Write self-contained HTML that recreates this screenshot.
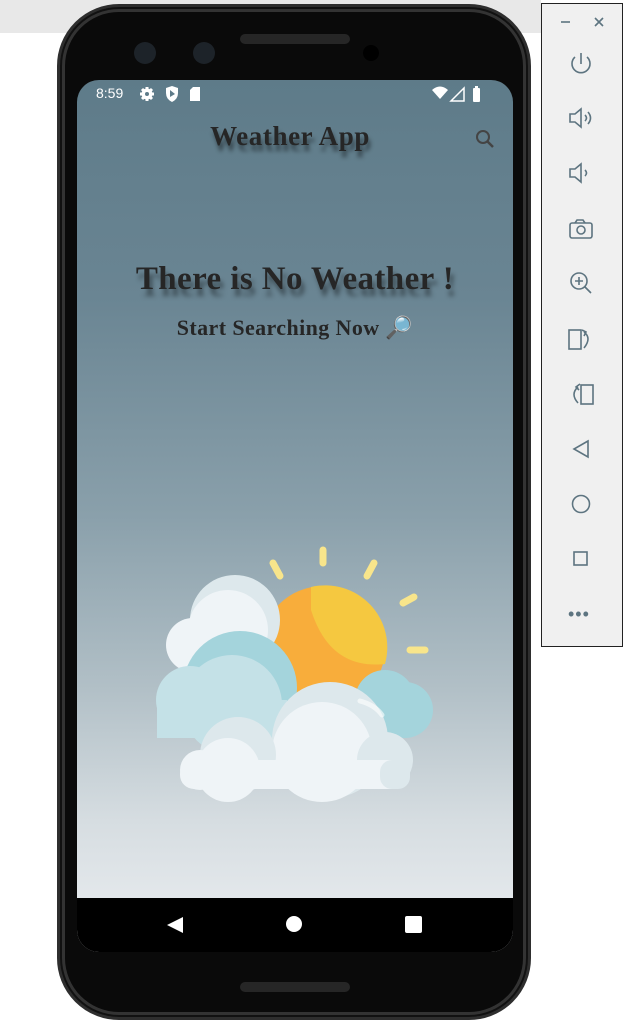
<!DOCTYPE html>
<html><head><meta charset="utf-8"><style>
*{margin:0;padding:0;box-sizing:border-box}
body{width:627px;height:1024px;position:relative;background:#fff;overflow:hidden;font-family:"Liberation Sans",sans-serif}
.topband{position:absolute;left:0;top:0;width:541px;height:33px;background:#e8e8e8}
.phone{position:absolute;left:57px;top:4px;width:474px;height:1016px;border-radius:62px;background:#0a0a0a;border:3px solid #2e2e2e;box-shadow:inset 0 0 0 2px #111,inset 0 0 0 5px #333}
.screen{position:absolute;left:77px;top:80px;width:436px;height:872px;border-radius:22px;overflow:hidden;background:linear-gradient(#5e7b89 0%,#6a8593 25%,#8aa0ab 50%,#b2c0c7 70%,#d6dde1 85%,#eceff2 100%)}
.nav{position:absolute;left:0;top:818px;width:436px;height:54px;background:#000}
.t{position:absolute;left:0;width:436px;text-align:center;font-family:"Liberation Serif",serif;font-weight:bold;color:#262626;white-space:nowrap}
.panel{position:absolute;left:541px;top:3px;width:82px;height:644px;background:#f0f0f0;border:1px solid #222}
.panel svg{position:absolute;left:0;top:0}
</style></head><body>
<div class="topband"></div>
<div class="phone"></div>
<div style="position:absolute;left:240px;top:34px;width:110px;height:10px;border-radius:5px;background:#262626"></div>
<div style="position:absolute;left:134px;top:42px;width:22px;height:22px;border-radius:50%;background:#1d2329"></div>
<div style="position:absolute;left:193px;top:42px;width:22px;height:22px;border-radius:50%;background:#1d2329"></div>
<div style="position:absolute;left:363px;top:45px;width:16px;height:16px;border-radius:50%;background:#000"></div>
<div style="position:absolute;left:240px;top:982px;width:110px;height:10px;border-radius:5px;background:#262626"></div>
<div class="screen">
 <div style="position:absolute;left:19px;top:5px;color:#fff;font-size:14px">8:59</div>
 <svg width="436" height="30" style="position:absolute;left:0;top:0">
  <g fill="#fff">
   <circle cx="70" cy="14" r="5.5"/>
   <g stroke="#fff" stroke-width="3"><line x1="70" y1="7" x2="70" y2="21"/><line x1="63" y1="14" x2="77" y2="14"/><line x1="65" y1="9" x2="75" y2="19"/><line x1="75" y1="9" x2="65" y2="19"/></g>
   <circle cx="70" cy="14" r="2" fill="#5e7b89"/>
   <path d="M89 8 L95 6 L101 8 L101 13 Q101 19 95 22 Q89 19 89 13Z"/>
   <path d="M116 7 L123 7 L123 21 L113 21 L113 10Z"/>
   <path d="M355 10 Q363 3 371 10 L363 19Z"/>
   <path d="M387 8 L387 21 L374 21Z" fill="none" stroke="#fff" stroke-width="1.5"/>
   <rect x="396" y="8" width="7" height="14" rx="1"/><rect x="398" y="6" width="3" height="2"/>
  </g>
  <path d="M93 10 L98 14 L93 17Z" fill="#5e7b89"/>
 </svg>
 <div class="t" style="top:41px;left:-5px;font-size:27px;letter-spacing:0.6px;text-shadow:2px 6px 4px rgba(0,0,0,.45)">Weather App</div>
 <svg width="30" height="30" style="position:absolute;left:393px;top:44px"><circle cx="13" cy="13" r="6" fill="none" stroke="#444" stroke-width="2"/><path d="M17.5 17.5 L23 23" stroke="#444" stroke-width="2.5"/></svg>
 <div class="t" style="top:181px;left:0px;font-size:33px;letter-spacing:0.4px;text-shadow:3px 7px 5px rgba(0,0,0,.4)">There is No Weather !</div>
 <div class="t" style="top:235px;left:0px;font-size:22px;letter-spacing:0.4px">Start Searching Now 🔎</div>
 <svg width="436" height="300" style="position:absolute;left:0;top:460px" viewBox="77 540 436 300">
  <g stroke="#f8e58b" stroke-width="7" stroke-linecap="round">
   <line x1="323" y1="550" x2="323" y2="563"/><line x1="273" y1="563" x2="280" y2="576"/><line x1="374" y1="563" x2="367" y2="576"/><line x1="403" y1="603" x2="414" y2="597"/><line x1="410" y1="650" x2="425" y2="650"/>
  </g>
  <circle cx="323" cy="648" r="62" fill="#f8ad3b"/>
  <path d="M311 587 A62 62 0 0 1 385 664 Q330 670 311 610Z" fill="#f5c840"/>
  <circle cx="235" cy="620" r="45" fill="#dde8ec"/>
  <circle cx="228" cy="630" r="40" fill="#eff4f7"/>
  <circle cx="193" cy="645" r="27" fill="#eff4f7"/>
  <circle cx="385" cy="700" r="30" fill="#a4d4dc"/>
  <circle cx="405" cy="710" r="28" fill="#a4d4dc"/>
  <circle cx="240" cy="688" r="57" fill="#a4d4dc"/>
  <circle cx="232" cy="705" r="50" fill="#c4e1e7"/>
  <circle cx="190" cy="700" r="34" fill="#c4e1e7"/>
  <rect x="157" y="700" width="130" height="38" fill="#c4e1e7"/>
  <circle cx="330" cy="740" r="58" fill="#dde8ec"/>
  <circle cx="322" cy="752" r="50" fill="#eff4f7"/>
  <circle cx="385" cy="760" r="28" fill="#dde8ec"/>
  <circle cx="238" cy="755" r="38" fill="#dde8ec"/>
  <circle cx="228" cy="770" r="32" fill="#eff4f7"/>
  <circle cx="200" cy="770" r="20" fill="#eff4f7"/>
  <rect x="180" y="760" width="228" height="29" rx="14" fill="#eff4f7"/>
  <rect x="380" y="760" width="30" height="29" rx="12" fill="#dde8ec"/>
  <path d="M360 701 Q375 705 382 715" stroke="#fff" stroke-width="5" stroke-linecap="round" fill="none" opacity=".6"/>
 </svg>
 <div class="nav">
  <svg width="436" height="54"><path d="M90 27 L106 19 L106 35Z" fill="#fff"/><circle cx="217" cy="26" r="8" fill="#fff"/><rect x="328" y="18" width="17" height="17" rx="2" fill="#fff"/></svg>
 </div>
</div>
<div class="panel">
 <svg width="82" height="644" fill="none" stroke="#5d7480" stroke-width="1.6">
  <line x1="19" y1="18" x2="28" y2="18"/><path d="M53 14 L61 22 M61 14 L53 22"/>
  <path d="M33 53 A9 9 0 1 0 45 53"/><line x1="39" y1="49" x2="39" y2="60"/>
  <path d="M28 110 L33 110 L39 105 L39 123 L33 118 L28 118Z"/><path d="M43 111 Q46 114 43 117 M46 108 Q51 114 46 120"/>
  <path d="M28 165 L33 165 L39 160 L39 178 L33 173 L28 173Z"/><path d="M43 166 Q46 169 43 172"/>
  <rect x="28" y="219" width="22" height="15" rx="2"/><circle cx="39" cy="226" r="4"/><path d="M33 219 L35 216 L41 216 L43 219"/>
  <circle cx="37" cy="277" r="8"/><path d="M37 273 L37 281 M33 277 L41 277 M43 283 L49 289"/>
  <rect x="27" y="326" width="12" height="19"/><path d="M42 328 Q50 334 42 344 M40 326 L44 328 L42 332"/>
  <rect x="39" y="381" width="12" height="19"/><path d="M36 383 Q28 390 36 399 M38 380 L34 383 L37 386"/>
  <path d="M46 437 L32 445 L46 453Z"/>
  <circle cx="39" cy="500" r="8.5"/>
  <rect x="32" y="548" width="13" height="13"/>
 </svg>
 <div style="position:absolute;left:26px;top:605px;color:#5d7480;font-size:18px;letter-spacing:1px;line-height:10px">•••</div>
</div>
</body></html>
